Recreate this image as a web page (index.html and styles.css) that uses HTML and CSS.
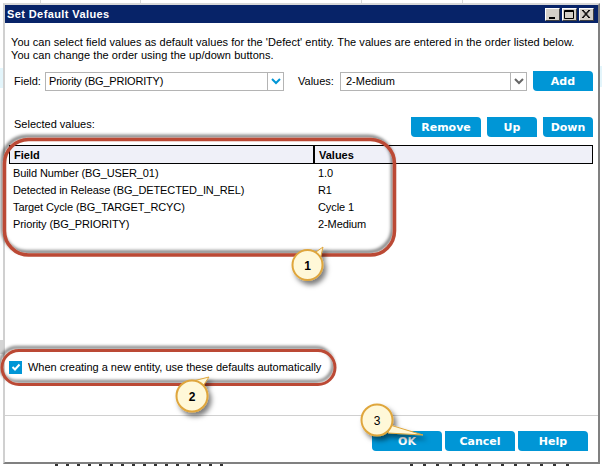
FILE: index.html
```html
<!DOCTYPE html>
<html lang="en">
<head>
<meta charset="utf-8">
<title>Set Default Values</title>
<link rel="stylesheet" href="styles.css">
</head>
<body>
<div class="dialog">
  <div class="titlebar">
    <span class="title">Set Default Values</span>
    <div class="winbtns">
      <span class="winbtn"><svg width="13" height="11" viewBox="0 0 13 11"><rect x="3" y="8" width="6" height="2" fill="#000"/></svg></span>
      <span class="winbtn"><svg width="13" height="11" viewBox="0 0 13 11"><path d="M1.500 1.500h9v8h-9zM1.500 2.500h9" fill="none" stroke="#000"/></svg></span>
      <span class="winbtn"><svg width="13" height="11" viewBox="0 0 13 11"><path d="M2 1l7 8M3 1l7 8M9 1l-7 8M10 1l-7 8" fill="none" stroke="#000"/></svg></span>
    </div>
  </div>
  <div class="content">
    <p class="intro">You can select field values as default values for the 'Defect' entity. The values are entered in the order listed below.<br>You can change the order using the up/down buttons.</p>
    <div class="picker">
      <label class="lbl-field">Field:</label>
      <div class="combo combo-field"><span class="combo-text">Priority (BG_PRIORITY)</span><span class="combo-arrow"><svg width="10" height="7" viewBox="0 0 10 7"><path d="M1 1l4 4 4-4" fill="none" stroke="#0096d6" stroke-width="2"/></svg></span></div>
      <label class="lbl-values">Values:</label>
      <div class="combo combo-values"><span class="combo-text combo-text-v">2-Medium</span><span class="combo-arrow"><svg width="10" height="7" viewBox="0 0 10 7"><path d="M1 1l4 4 4-4" fill="none" stroke="#666" stroke-width="2"/></svg></span></div>
      <button class="btn btn-add">Add</button>
    </div>
    <div class="selbar">
      <span class="sel-label">Selected values:</span>
      <div class="sel-btns">
        <button class="btn btn-remove">Remove</button>
        <button class="btn btn-up">Up</button>
        <button class="btn btn-down">Down</button>
      </div>
    </div>
    <div class="grid">
      <div class="grid-head"><span class="col-a">Field</span><span class="col-b">Values</span></div>
      <div class="grid-row"><span class="cell-a">Build Number (BG_USER_01)</span><span class="cell-b">1.0</span></div>
      <div class="grid-row"><span class="cell-a">Detected in Release (BG_DETECTED_IN_REL)</span><span class="cell-b">R1</span></div>
      <div class="grid-row"><span class="cell-a">Target Cycle (BG_TARGET_RCYC)</span><span class="cell-b">Cycle 1</span></div>
      <div class="grid-row"><span class="cell-a">Priority (BG_PRIORITY)</span><span class="cell-b">2-Medium</span></div>
    </div>
    <div class="auto">
      <span class="check"><svg width="12" height="12" viewBox="0 0 12 12"><path d="M2.500 6l2.500 2.500 4.500-5" fill="none" stroke="#fff" stroke-width="2"/></svg></span>
      <span class="auto-text">When creating a new entity, use these defaults automatically</span>
    </div>
  </div>
  <div class="footer">
    <button class="btn btn-ok">OK</button>
    <button class="btn btn-cancel">Cancel</button>
    <button class="btn btn-help">Help</button>
  </div>
</div>
<svg class="marks" width="602" height="466" viewBox="0 0 602 466">
  <defs>
    <filter id="sh" x="-10%" y="-20%" width="120%" height="140%"><feDropShadow dx="-2" dy="-3" stdDeviation="1.500" flood-color="#000" flood-opacity=".5"/></filter>
    <filter id="cs" x="-40%" y="-40%" width="180%" height="180%"><feDropShadow dx="3" dy="4" stdDeviation="2.500" flood-color="#000" flood-opacity=".5"/></filter>
  </defs>
  <rect x="4.500" y="139.500" width="390" height="115.500" rx="24" fill="none" stroke="#bb4a34" stroke-width="3.500" filter="url(#sh)"/>
  <rect x="2" y="350.500" width="333" height="34" rx="17" fill="none" stroke="#bb4a34" stroke-width="3" filter="url(#sh)"/>
  <g filter="url(#cs)" fill="#fff8d8" stroke="#dfa63c" stroke-width="2">
    <path d="M323 247L316 252L320 260Z" stroke-width="1"/>
    <circle cx="307.500" cy="265" r="15"/>
    <path d="M209 377L193 381L203 386Z" stroke-width="1"/>
    <circle cx="192" cy="396" r="15.500"/>
    <path d="M423 435L390 425L388 433Z" stroke-width="1"/>
    <circle cx="377" cy="420" r="15.500"/>
  </g>
  <text class="num num-b" x="307.500" y="269.500">1</text>
  <text class="num num-b" x="192" y="400.500">2</text>
  <text class="num" x="377" y="424.500">3</text>
</svg>
</body>
</html>
```
FILE: styles.css
```css
* { box-sizing: border-box; }
html, body { margin: 0; padding: 0; }
body {
  width: 602px;
  height: 466px;
  overflow: hidden;
  background-color: #fff;
  background-image:
    linear-gradient(#d8d8d8, #d8d8d8),
    linear-gradient(#d8d8d8, #d8d8d8),
    linear-gradient(#d8d8d8, #d8d8d8),
    linear-gradient(#d8d8d8, #d8d8d8),
    linear-gradient(#e3f5fb, #e3f5fb),
    linear-gradient(#e3f5fb, #e3f5fb),
    linear-gradient(#d4d4d4, #d4d4d4),
    repeating-linear-gradient(90deg, #333 0 3px, #fff 3px 11px),
    repeating-linear-gradient(90deg, #333 0 3px, #fff 3px 13px);
  background-size: 1px 4px, 1px 4px, 1px 4px, 1px 4px, 3px 20px, 2px 21px, 3px 14px, 175px 2px, 160px 2px;
  background-position: 40px 0, 140px 0, 361px 0, 462px 0, 0 68px, 600px 66px, 0 340px, 55px 464px, 410px 464px;
  background-repeat: no-repeat;
  padding: 3px 2px 0 3px;
  position: relative;
  font-family: "Liberation Sans", Arial, sans-serif;
  font-size: 11px;
  color: #000;
}
.dialog {
  width: 597px;
  height: 461px;
  background: #fff;
  border-left: 2px solid #d0d0d0;
  border-top: 2px solid #d8d8d8;
  border-right: 2px solid #808080;
  border-bottom: 2px solid #808080;
  display: flex;
  flex-direction: column;
}
.titlebar {
  height: 18px;
  background: #072368;
  color: #fff;
  display: flex;
  align-items: center;
  justify-content: space-between;
  flex: none;
}
.title {
  font-weight: 700;
  font-size: 11px;
  padding-left: 2px;
  letter-spacing: .4px;
}
.winbtns { display: flex; gap: 2px; padding-right: 4px; }
.winbtn {
  width: 15px;
  height: 13px;
  background: #d4d0c8;
  border: 1px solid;
  border-color: #fff #404040 #404040 #fff;
  display: flex;
  align-items: center;
  justify-content: center;
}
.winbtn svg { flex: none; }
.content { flex: 1; display: flex; flex-direction: column; padding: 13px 5px 0 4px; min-height: 0; }
.intro { margin: 0 0 0 2px; line-height: 13px; font-size: 11px; letter-spacing: .05px; }
.picker { display: flex; align-items: center; height: 20px; margin-top: 9px; }
.lbl-field { margin-left: 5px; width: 31px; flex: none; }
.combo {
  height: 19px;
  border: 1px solid #b4b4b4;
  display: flex;
  align-items: center;
  flex: none;
}
.combo-field { width: 239px; }
.combo-values { width: 187px; }
.combo-text { flex: 1; padding-left: 3px; letter-spacing: -.2px; }
.combo-text-v { padding-left: 5px; letter-spacing: 0; }
.combo-arrow {
  width: 16px;
  height: 100%;
  border-left: 1px solid #b4b4b4;
  display: flex;
  align-items: center;
  justify-content: center;
}
.lbl-values { margin-left: 14px; width: 42px; flex: none; }
.btn {
  border: 0;
  padding: 0;
  height: 20px;
  background: #0096d6;
  color: #fff;
  font-family: "DejaVu Sans", sans-serif;
  font-weight: 700;
  font-size: 11px;
  border-radius: 0 4px 0 4px;
}
.btn-add { width: 60px; margin-left: 6px; }
.selbar { display: flex; align-items: flex-end; justify-content: space-between; height: 20px; margin-top: 26px; }
.sel-label { margin-left: 5px; margin-bottom: 6px; line-height: 13px; }
.sel-btns { display: flex; gap: 6px; }
.btn-remove { width: 70px; }
.btn-up { width: 50px; }
.btn-down { width: 50px; }
.grid { margin-top: 8px; width: 584px; }
.grid-head {
  display: flex;
  height: 19px;
  background: #eff0f8;
  border: 1px solid #000;
  font-weight: 700;
  align-items: center;
}
.col-a { width: 305px; padding-left: 4px; border-right: 2px solid #000; height: 100%; line-height: 18px; flex: none; }
.col-b { padding-left: 4px; }
.grid-row { display: flex; height: 17px; line-height: 17px; letter-spacing: -.1px; }
.grid-head + .grid-row { margin-top: 1px; }
.cell-a { width: 305px; padding-left: 4px; flex: none; }
.cell-b { padding-left: 4px; }
.auto { display: flex; align-items: center; margin-top: 126px; height: 16px; }
.check {
  width: 13px;
  height: 13px;
  background: #0096d6;
  display: flex;
  align-items: center;
  justify-content: center;
  flex: none;
}
.auto-text { margin-left: 6px; letter-spacing: -.02px; }
.footer {
  margin-top: auto;
  height: 47px;
  border-top: 1px solid #d0d0d0;
  display: flex;
  justify-content: flex-end;
  gap: 3px;
  padding: 15px 10px 0 0;
  flex: none;
}
.btn-ok, .btn-cancel, .btn-help { width: 70px; }
.marks { position: absolute; left: 0; top: 0; pointer-events: none; }
.num { font-family: "Liberation Sans", Arial, sans-serif; font-size: 12px; text-anchor: middle; fill: #000; }
.num-b { font-weight: 700; }
```
